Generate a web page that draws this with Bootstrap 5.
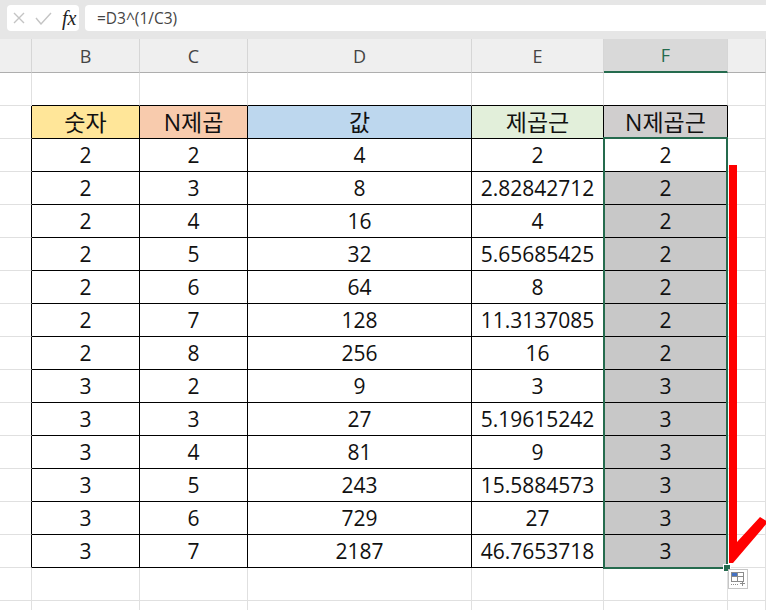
<!DOCTYPE html>
<html lang="ko">
<head>
<meta charset="utf-8">
<title>Excel</title>
<link rel="stylesheet" href="https://cdn.jsdelivr.net/npm/bootstrap@5.3.0/dist/css/bootstrap.min.css">
<style>
html,body{margin:0;background:#fff;overflow:hidden}
.xl-app{position:relative;width:766px;height:610px;overflow:hidden;font-family:"Open Sans","Noto Sans CJK KR",sans-serif}
.xl-bar{height:39px;background:#e6e6e6;padding:5px 0 7px 7px;gap:6px}
.xl-tools{width:72px;height:26px;background:#fff;border-radius:4px;padding-left:6px}
.xl-fx{font-family:"Liberation Serif",serif;font-style:italic;font-weight:400;font-size:20px;color:#222;margin-left:10px;line-height:26px}
.xl-check{margin-left:10px}
.xl-formula{height:26px;background:#fff;border-radius:4px 0 0 4px;padding-left:12px;font-size:15.5px;line-height:26px;color:#444}
.xl-grid{table-layout:fixed;border-collapse:separate;border-spacing:0;width:766px;font-size:21px;color:#111}
.xl-c0{width:32px}
.xl-c1{width:108px}
.xl-c3{width:224px}
.xl-c4{width:132px}
.xl-c5{width:124px}
.xl-grid th,.xl-grid td{height:33px;padding:0;text-align:center;vertical-align:middle;border:0;border-right:1px solid #e0e0e0;border-bottom:1px solid #e0e0e0;font-weight:400;line-height:1;overflow:hidden;white-space:nowrap}
.xl-grid thead th{height:34px;background:#efefef;color:#444;font-size:18px;border-right-color:#d6d6d6;border-bottom:1px solid #aeaeae}
.xl-grid thead th.xl-on{background:#d9d9d9;color:#256b4e;border-bottom:2px solid #256b4e}
.xl-grid td.xl-k{border-right-color:#000;border-bottom-color:#000}
.xl-grid td.xl-r{border-right-color:#000}
.xl-grid td.xl-b{border-bottom-color:#000}
.xl-grid td.xl-y{background:#ffe699}
.xl-grid td.xl-o{background:#f8cbad}
.xl-grid td.xl-s{background:#bdd7ee}
.xl-grid td.xl-g{background:#e2efda}
.xl-grid td.xl-h{background:#d0cece}
.xl-grid td.xl-f{background:#c8c8c8}
.xl-grid td.xl-y,.xl-grid td.xl-o,.xl-grid td.xl-s,.xl-grid td.xl-g,.xl-grid td.xl-h{font-size:23px}
.xl-sel{position:absolute;left:603px;top:137px;width:125px;height:432px;border:2px solid #256b4e;pointer-events:none}
.xl-handle{position:absolute;left:724px;top:565px;width:6px;height:6px;background:#256b4e;outline:1px solid #fff}
.xl-arrow{position:absolute;left:0;top:0}
.xl-qa{position:absolute;left:728px;top:569px;width:20px;height:20px;background:#fff;border:1px solid #c6c6c6}
</style>
</head>
<body>
<div class="xl-app">
  <div class="xl-bar d-flex align-items-start">
    <div class="xl-tools d-flex align-items-center flex-shrink-0">
      <svg width="12" height="12" viewBox="0 0 12 12"><path d="M1 1 11 11M11 1 1 11" stroke="#c4c4c4" stroke-width="1.4" fill="none"/></svg>
      <svg class="xl-check" width="17" height="13" viewBox="0 0 17 13"><path d="M1 6 6 12 16 1" stroke="#c4c4c4" stroke-width="1.4" fill="none"/></svg>
      <span class="xl-fx">fx</span>
    </div>
    <div class="xl-formula flex-grow-1">=D3^(1/C3)</div>
  </div>
  <table class="xl-grid">
    <colgroup><col class="xl-c0"><col class="xl-c1"><col class="xl-c1"><col class="xl-c3"><col class="xl-c4"><col class="xl-c5"><col></colgroup>
    <thead><tr><th></th><th>B</th><th>C</th><th>D</th><th>E</th><th class="xl-on">F</th><th></th></tr></thead>
    <tbody>
      <tr><td></td><td class="xl-b"></td><td class="xl-b"></td><td class="xl-b"></td><td class="xl-b"></td><td class="xl-b"></td><td></td></tr>
      <tr><td class="xl-r"></td><td class="xl-k xl-y">숫자</td><td class="xl-k xl-o">N제곱</td><td class="xl-k xl-s">값</td><td class="xl-k xl-g">제곱근</td><td class="xl-k xl-h">N제곱근</td><td></td></tr>
      <tr><td class="xl-r"></td><td class="xl-k">2</td><td class="xl-k">2</td><td class="xl-k">4</td><td class="xl-k">2</td><td class="xl-k">2</td><td></td></tr>
      <tr><td class="xl-r"></td><td class="xl-k">2</td><td class="xl-k">3</td><td class="xl-k">8</td><td class="xl-k">2.82842712</td><td class="xl-k xl-f">2</td><td></td></tr>
      <tr><td class="xl-r"></td><td class="xl-k">2</td><td class="xl-k">4</td><td class="xl-k">16</td><td class="xl-k">4</td><td class="xl-k xl-f">2</td><td></td></tr>
      <tr><td class="xl-r"></td><td class="xl-k">2</td><td class="xl-k">5</td><td class="xl-k">32</td><td class="xl-k">5.65685425</td><td class="xl-k xl-f">2</td><td></td></tr>
      <tr><td class="xl-r"></td><td class="xl-k">2</td><td class="xl-k">6</td><td class="xl-k">64</td><td class="xl-k">8</td><td class="xl-k xl-f">2</td><td></td></tr>
      <tr><td class="xl-r"></td><td class="xl-k">2</td><td class="xl-k">7</td><td class="xl-k">128</td><td class="xl-k">11.3137085</td><td class="xl-k xl-f">2</td><td></td></tr>
      <tr><td class="xl-r"></td><td class="xl-k">2</td><td class="xl-k">8</td><td class="xl-k">256</td><td class="xl-k">16</td><td class="xl-k xl-f">2</td><td></td></tr>
      <tr><td class="xl-r"></td><td class="xl-k">3</td><td class="xl-k">2</td><td class="xl-k">9</td><td class="xl-k">3</td><td class="xl-k xl-f">3</td><td></td></tr>
      <tr><td class="xl-r"></td><td class="xl-k">3</td><td class="xl-k">3</td><td class="xl-k">27</td><td class="xl-k">5.19615242</td><td class="xl-k xl-f">3</td><td></td></tr>
      <tr><td class="xl-r"></td><td class="xl-k">3</td><td class="xl-k">4</td><td class="xl-k">81</td><td class="xl-k">9</td><td class="xl-k xl-f">3</td><td></td></tr>
      <tr><td class="xl-r"></td><td class="xl-k">3</td><td class="xl-k">5</td><td class="xl-k">243</td><td class="xl-k">15.5884573</td><td class="xl-k xl-f">3</td><td></td></tr>
      <tr><td class="xl-r"></td><td class="xl-k">3</td><td class="xl-k">6</td><td class="xl-k">729</td><td class="xl-k">27</td><td class="xl-k xl-f">3</td><td></td></tr>
      <tr><td class="xl-r"></td><td class="xl-k">3</td><td class="xl-k">7</td><td class="xl-k">2187</td><td class="xl-k">46.7653718</td><td class="xl-k xl-f">3</td><td></td></tr>
      <tr><td></td><td></td><td></td><td></td><td></td><td></td><td></td></tr>
      <tr><td></td><td></td><td></td><td></td><td></td><td></td><td></td></tr>
    </tbody>
  </table>
  <div class="xl-sel"></div>
  <div class="xl-handle"></div>
  <svg class="xl-arrow" width="766" height="610" viewBox="0 0 766 610"><polygon points="729,165 737,165 737,542 760,517 768,522 733,563 729,563" fill="#ff0000"/></svg>
  <div class="xl-qa">
    <svg class="d-block" width="18" height="18" viewBox="0 0 18 18"><rect x="2.5" y="2.5" width="12" height="9" fill="#fff" stroke="#8c8c8c"/><rect x="3" y="3" width="5.5" height="3.5" fill="#4472c4"/><path d="M2.5 6.5H14.5M8.5 2.5V11.5" stroke="#8c8c8c" fill="none"/><path d="M2 14.5h7" stroke="#8c8c8c" stroke-dasharray="1 1" fill="none"/><path d="M13.5 11v5M11 13.5h5" stroke="#8c8c8c" fill="none"/></svg>
  </div>
</div>
<script src="https://cdn.jsdelivr.net/npm/bootstrap@5.3.0/dist/js/bootstrap.bundle.min.js"></script>
</body>
</html>
